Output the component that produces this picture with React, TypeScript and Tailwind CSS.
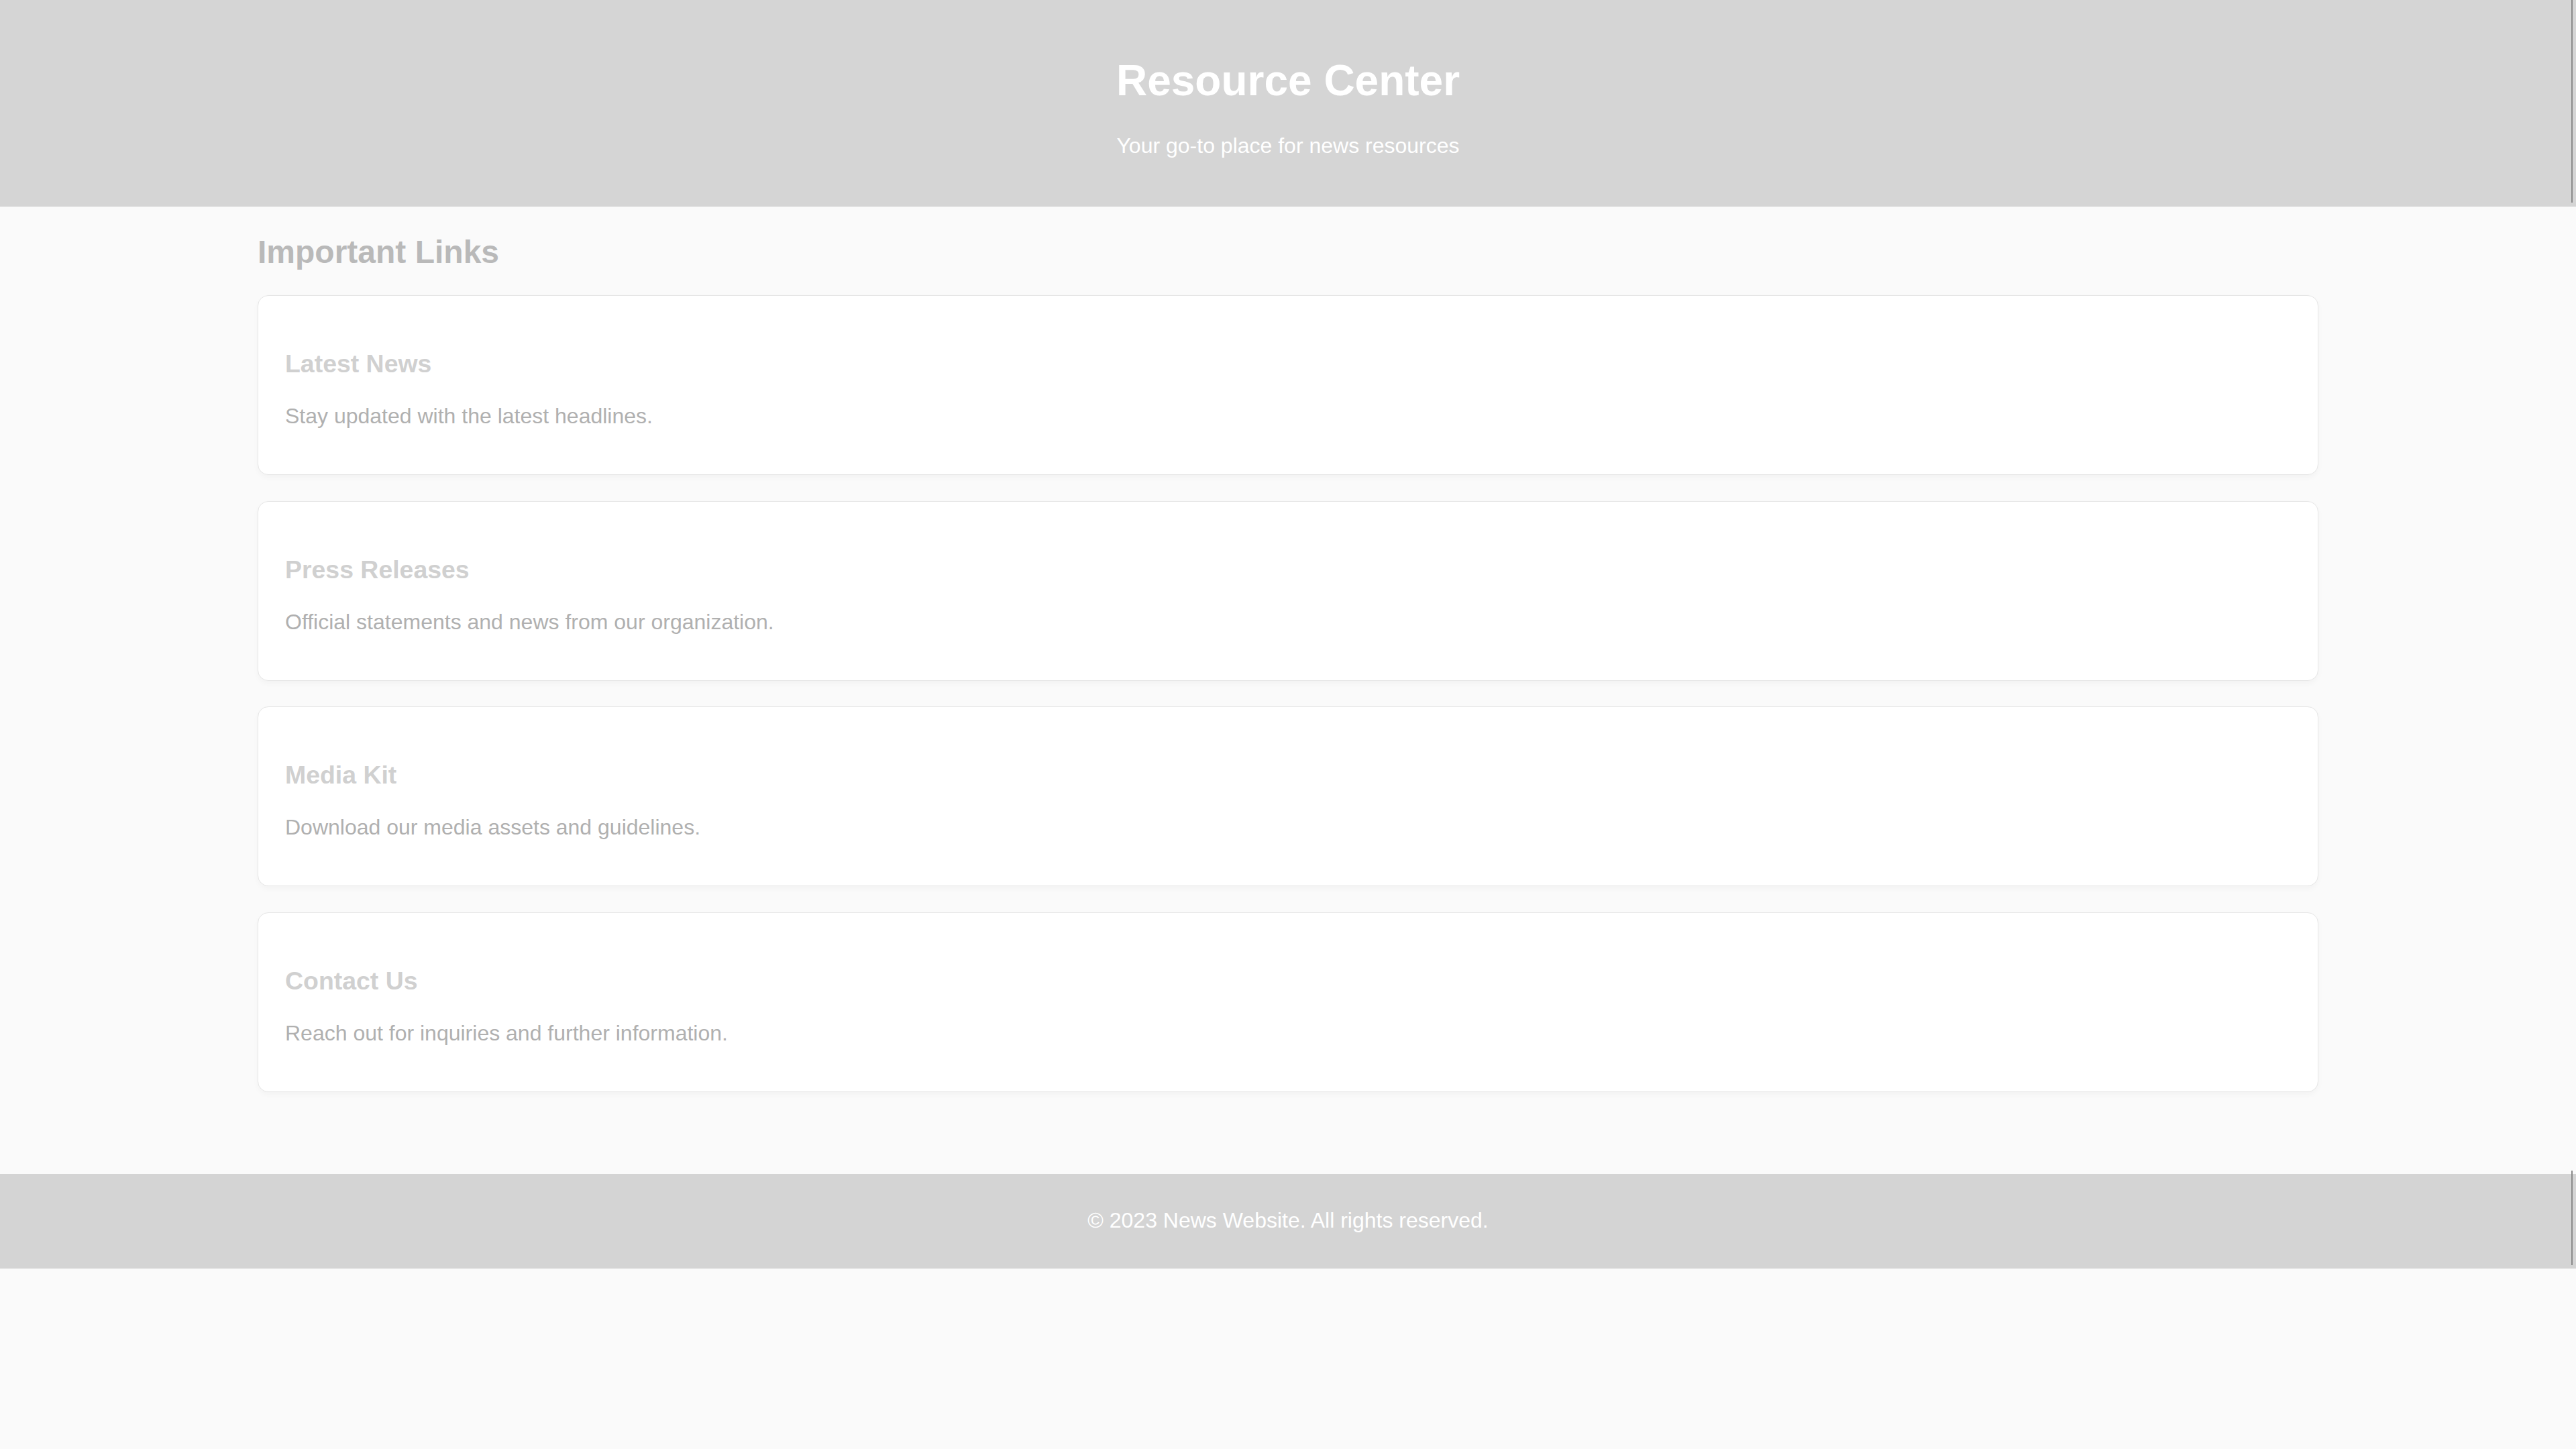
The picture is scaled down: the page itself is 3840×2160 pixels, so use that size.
import React from "react";

const links = [
  { title: "Latest News", desc: "Stay updated with the latest headlines." },
  { title: "Press Releases", desc: "Official statements and news from our organization." },
  { title: "Media Kit", desc: "Download our media assets and guidelines." },
  { title: "Contact Us", desc: "Reach out for inquiries and further information." },
];

export default function App() {
  return (
    <div
      className="min-h-[2160px] w-full bg-[#fafafa]"
      style={{ fontFamily: '"Liberation Sans", Arial, sans-serif' }}
    >
      <header className="relative bg-[#d5d5d5] pt-[83px] pb-[72px] text-center text-white">
        <h1 className="text-[64px] font-bold leading-[74px]">Resource Center</h1>
        <p className="mt-[42px] text-[32px] leading-[37px]">Your go-to place for news resources</p>
        <div className="absolute right-[5px] top-0 bottom-[6px] w-[2px] bg-[#8a8a8a]" />
      </header>

      <main className="mx-auto w-[3072px] pt-[40px] pb-[122px]">
        <h2 className="text-[48px] font-bold leading-[55px] text-[#b9b9b9]">Important Links</h2>
        <div className="mt-[37px] flex flex-col gap-[38.5px]">
          {links.map((l) => (
            <div
              key={l.title}
              className="h-[268px] rounded-[16px] border border-[#e6e6e6] bg-white px-[40px] pt-[80px] shadow-[0_4px_8px_rgba(0,0,0,0.03)]"
            >
              <h3 className="text-[37.44px] font-bold leading-[43px] text-[#d0d0d0]">{l.title}</h3>
              <p className="mt-[38px] text-[32px] leading-[37px] text-[#b0b0b0]">{l.desc}</p>
            </div>
          ))}
        </div>
      </main>

      <footer className="relative bg-[#d4d4d4] pt-[51px] pb-[53px] text-center text-white">
        <p className="text-[32px] leading-[37px]">© 2023 News Website. All rights reserved.</p>
        <div className="absolute right-[5px] -top-[5px] bottom-[5px] w-[2px] bg-[#8a8a8a]" />
      </footer>
    </div>
  );
}
